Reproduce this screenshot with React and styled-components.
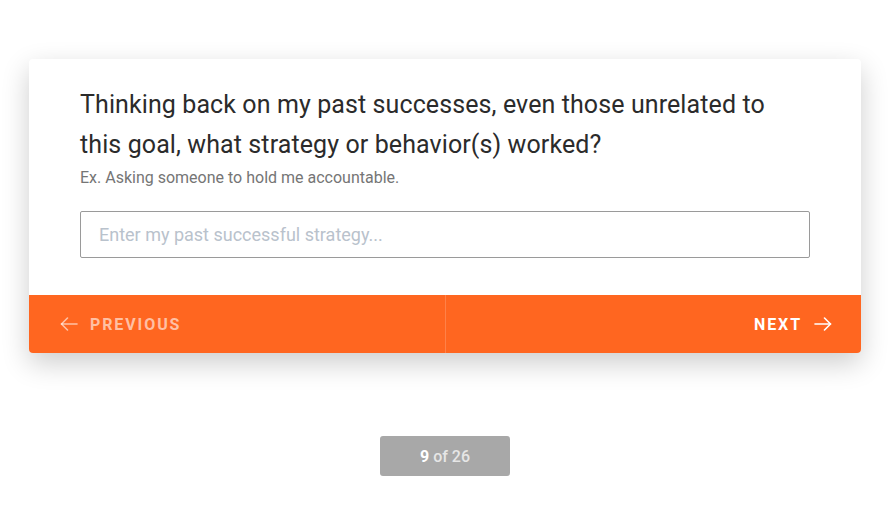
import React from "react";
import styled, { createGlobalStyle } from "styled-components";

const Global = createGlobalStyle`
  html, body { margin: 0; padding: 0; background: #fff; }
  body { font-family: Roboto, "Liberation Sans", sans-serif; }
`;

const Page = styled.div`
  display: flex;
  flex-direction: column;
  align-items: center;
  padding: 59px 1px 0 0;
`;

const Card = styled.div`
  width: 832px;
  background: #fff;
  border-radius: 4px;
  box-shadow: 0 10px 28px rgba(0, 0, 0, 0.2);
  overflow: hidden;
`;

const Body = styled.div`
  padding: 26px 51px 37px 51px;
`;

const Question = styled.h2`
  margin: 0;
  max-width: 700px;
  font-size: 25px;
  font-weight: 400;
  line-height: 40px;
  letter-spacing: 0.1px;
  color: #2b2b2b;
`;

const Hint = styled.p`
  margin: 0 0 20px 0;
  font-size: 16px;
  line-height: 26px;
  color: #757575;
`;

const Input = styled.input`
  display: block;
  box-sizing: border-box;
  width: 100%;
  height: 47px;
  border: 1px solid #9a9a9a;
  border-radius: 2px;
  padding: 0 18px;
  font-family: Roboto, "Liberation Sans", sans-serif;
  font-size: 18px;
  color: #333;
  outline: none;
  &::placeholder { color: #b9c2cc; }
`;

const Footer = styled.div`
  display: grid;
  grid-template-columns: 1fr 1fr;
  height: 58px;
  background: #ff6620;
`;

const NavButton = styled.button`
  display: flex;
  align-items: center;
  justify-content: ${(p) => (p.$right ? "flex-end" : "flex-start")};
  gap: 12px;
  padding: 0 29px 0 31px;
  border: none;
  background: transparent;
  border-left: ${(p) => (p.$right ? "1px solid rgba(255,255,255,0.18)" : "none")};
  font-family: Roboto, "Liberation Sans", sans-serif;
  font-size: 16px;
  font-weight: 700;
  letter-spacing: 1.9px;
  color: ${(p) => (p.$dim ? "rgba(255,255,255,0.6)" : "#fff")};
  cursor: pointer;
  svg { flex: none; }
`;

const Pager = styled.div`
  margin-top: 83px;
  width: 130px;
  height: 40px;
  border-radius: 3px;
  background: #a8a8a8;
  display: flex;
  align-items: center;
  justify-content: center;
  font-size: 16px;
  font-weight: 500;
  color: #e6e6e6;
  b { color: #fff; font-weight: 700; margin-right: 4px; }
`;

const Arrow = ({ dir }) => (
  <svg width="18" height="14" viewBox="0 0 18 14" fill="none" stroke="currentColor" strokeWidth="1.6" strokeLinecap="round" strokeLinejoin="round">
    {dir === "left" ? (
      <>
        <path d="M17 7H1.5" />
        <path d="M7.5 1L1.5 7l6 6" />
      </>
    ) : (
      <>
        <path d="M1 7h15.5" />
        <path d="M10.5 1l6 6-6 6" />
      </>
    )}
  </svg>
);

export default function App() {
  return (
    <>
      <Global />
      <Page>
        <Card>
          <Body>
            <Question>
              Thinking back on my past successes, even those unrelated to this goal, what strategy or behavior(s) worked?
            </Question>
            <Hint>Ex. Asking someone to hold me accountable.</Hint>
            <Input placeholder="Enter my past successful strategy..." />
          </Body>
          <Footer>
            <NavButton $dim>
              <Arrow dir="left" />
              PREVIOUS
            </NavButton>
            <NavButton $right>
              NEXT
              <Arrow dir="right" />
            </NavButton>
          </Footer>
        </Card>
        <Pager>
          <b>9</b>of 26
        </Pager>
      </Page>
    </>
  );
}
